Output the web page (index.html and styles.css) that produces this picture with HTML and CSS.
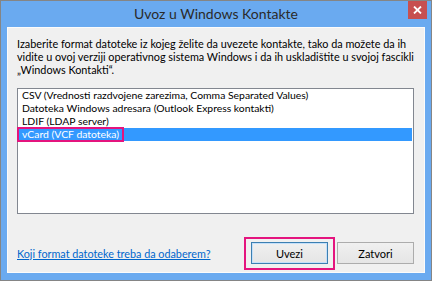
FILE: index.html
```html
<!DOCTYPE html>
<html lang="sr">
<head>
  <meta charset="UTF-8" />
  <title>Uvoz u Windows Kontakte</title>
  <link rel="stylesheet" href="styles.css">
</head>
<body>

<div class="window">

  <!-- title bar -->
  <div class="titlebar">
    <span class="title">Uvoz u Windows Kontakte</span>
    <div class="close-btn">
      <svg width="9" height="8" viewBox="0 0 9 8">
        <path d="M1 0.5 L8 7.5 M8 0.5 L1 7.5" stroke="#fff" stroke-width="1.8" fill="none"/>
      </svg>
    </div>
  </div>

  <div class="content">
    <p class="intro">Izaberite format datoteke iz kojeg želite da uvezete kontakte, tako da možete da ih<br>
      vidite u ovoj verziji operativnog sistema Windows i da ih uskladištite u svojoj fascikli<br>
      „Windows Kontakti“.</p>

    <ul class="listbox">
      <li>CSV (Vrednosti razdvojene zarezima, Comma Separated Values)</li>
      <li>Datoteka Windows adresara (Outlook Express kontakti)</li>
      <li>LDIF (LDAP server)</li>
      <li class="selected"><span class="mark">vCard (VCF datoteka)</span></li>
    </ul>

    <div class="footer">
      <a class="help-link" href="#">Koji format datoteke treba da odaberem?</a>
      <div class="buttons">
        <span class="btn-wrap"><button class="btn default">Uvezi</button></span>
        <button class="btn">Zatvori</button>
      </div>
    </div>
  </div>

</div>

</body>
</html>
```

FILE: styles.css
```css
html, body {
  margin: 0;
  padding: 0;
  background: #6aaaf0;
}

.window {
  box-sizing: border-box;
  width: 432px;
  height: 281px;
  border: 1px solid #858585;
  background: #6aaaf0;
  display: flex;
  flex-direction: column;
  position: relative;
  font-family: Lato, "Liberation Sans", sans-serif;
}

.titlebar {
  height: 26px;
  display: flex;
  align-items: center;
  justify-content: center;
}

.title {
  font-size: 14px;
  color: #2a2a2a;
  margin-top: -2px;
}

.close-btn {
  position: absolute;
  top: 0;
  right: 4px;
  width: 19px;
  height: 18px;
  background: #c75050;
  display: flex;
  align-items: center;
  justify-content: center;
}

.content {
  box-sizing: border-box;
  height: 246px;
  margin: 0 6px;
  background: #f0f0f0;
  border: 1px solid #fbfbfb;
  padding: 9px 10px 8px 9px;
  display: flex;
  flex-direction: column;
  font-size: 11px;
  color: #000;
}

.intro {
  margin: 0;
  line-height: 13px;
  white-space: nowrap;
  font-size: 10.85px;
}

.listbox {
  list-style: none;
  margin: 12px 0 0 0;
  padding: 0 1px;
  height: 126px;
  box-sizing: border-box;
  background: #fff;
  border: 1px solid #828790;
  font-size: 10.4px;
}

.listbox li {
  height: 13px;
  line-height: 13px;
  padding-left: 3px;
  white-space: nowrap;
}

.listbox li.selected {
  background: #3399ff;
  color: #fff;
}

/* annotation highlight */
.mark {
  position: relative;
}

.mark::after {
  content: "";
  position: absolute;
  left: -5px;
  top: -1px;
  right: -5px;
  bottom: -2px;
  border: 2px solid #e4147e;
}

.footer {
  margin-top: auto;
  display: flex;
  align-items: center;
  justify-content: space-between;
}

.help-link {
  color: #0066cc;
  text-decoration: underline;
  font-size: 10.8px;
}

.buttons {
  display: flex;
  gap: 9px;
}

.btn-wrap {
  position: relative;
  display: flex;
}

.btn-wrap::after {
  content: "";
  position: absolute;
  left: -7px;
  top: -5px;
  right: -7px;
  bottom: -6px;
  border: 2px solid #e4147e;
}

.btn {
  width: 77px;
  height: 22px;
  padding: 0;
  font-family: Lato, "Liberation Sans", sans-serif;
  font-size: 11px;
  color: #000;
  background: linear-gradient(#f0f0f0, #e5e5e5);
  border: 1px solid #acacac;
}

.btn.default {
  border-color: #3c7fb1;
  box-shadow: inset 0 0 0 1px #c4e0fa;
}
```
